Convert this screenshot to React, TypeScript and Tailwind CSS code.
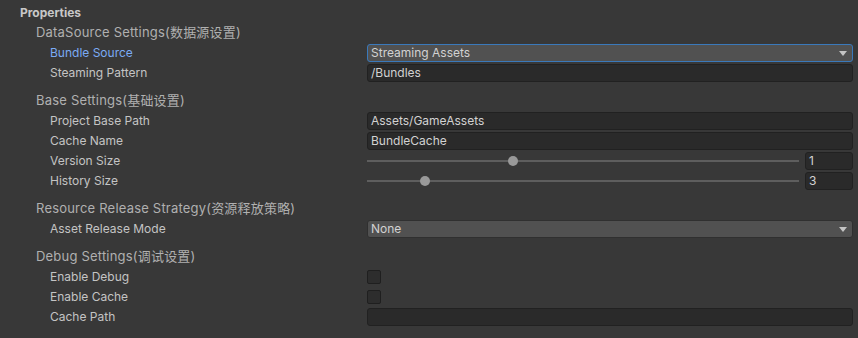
import React from 'react';

const FONT = { fontFamily: 'Inter, "Noto Sans CJK SC", sans-serif' };

function Label({ text, active }: { text: string; active?: boolean }) {
  return (
    <div className={`w-[367px] shrink-0 pl-[50px] text-[12px] ${active ? 'text-[#7babf4]' : 'text-[#c4c4c4]'}`}>
      {text}
    </div>
  );
}

function Row({ label, active, children }: { label: string; active?: boolean; children?: React.ReactNode }) {
  return (
    <div className="flex h-5 items-center pr-[5px]">
      <Label text={label} active={active} />
      <div className="flex h-[18px] flex-1 items-center">{children}</div>
    </div>
  );
}

function TextField({ value }: { value?: string }) {
  return (
    <div className="flex h-[18px] flex-1 items-center rounded-[3px] border border-[#212121] bg-[#2a2a2a] pl-[3px] text-[12px] text-[#d2d2d2]">
      {value}
    </div>
  );
}

function Dropdown({ value, focused }: { value: string; focused?: boolean }) {
  return (
    <div
      className={`flex h-[18px] flex-1 items-center justify-between rounded-[3px] border bg-[#515151] pl-[3px] pr-[5px] text-[12px] text-[#d2d2d2] ${
        focused ? 'border-[#3a79bb]' : 'border-[#303030]'
      }`}
    >
      <span>{value}</span>
      <svg width="8" height="5" viewBox="0 0 8 5">
        <path d="M0 0 L8 0 L4 5 Z" fill="#c4c4c4" />
      </svg>
    </div>
  );
}

function Slider({ value, thumb }: { value: number; thumb: number }) {
  return (
    <div className="flex flex-1 items-center">
      <div className="relative h-[18px] flex-1">
        <div className="absolute left-0 right-0 top-[8px] h-[2px] bg-[#5e5e5e]" />
        <div
          className="absolute top-[4px] h-[10px] w-[10px] rounded-full bg-[#999999]"
          style={{ left: thumb }}
        />
      </div>
      <div className="ml-[6px] flex h-[18px] w-[48px] items-center rounded-[3px] border border-[#212121] bg-[#2a2a2a] pl-[3px] text-[12px] text-[#d2d2d2]">
        {value}
      </div>
    </div>
  );
}

function Checkbox() {
  return <div className="h-[14px] w-[14px] rounded-[2px] border border-[#1f1f1f] bg-[#2d2d2d]" />;
}

function Header({ text }: { text: string }) {
  return (
    <div className="flex h-5 items-center pl-[36px] text-[13px] tracking-[0.2px] text-[#b0b0b0]">{text}</div>
  );
}

export default function App() {
  return (
    <div className="h-[338px] w-[858px] overflow-hidden bg-[#383838] pt-[3px]" style={FONT}>
      <div className="flex h-5 items-center pl-[20px] text-[12px] font-bold text-[#c8c8c8]">Properties</div>

      <Header text="DataSource Settings(数据源设置)" />
      <Row label="Bundle Source" active>
        <Dropdown value="Streaming Assets" focused />
      </Row>
      <Row label="Steaming Pattern">
        <TextField value="/Bundles" />
      </Row>

      <div className="mt-2">
        <Header text="Base Settings(基础设置)" />
        <Row label="Project Base Path">
          <TextField value="Assets/GameAssets" />
        </Row>
        <Row label="Cache Name">
          <TextField value="BundleCache" />
        </Row>
        <Row label="Version Size">
          <Slider value={1} thumb={141} />
        </Row>
        <Row label="History Size">
          <Slider value={3} thumb={53} />
        </Row>
      </div>

      <div className="mt-2">
        <Header text="Resource Release Strategy(资源释放策略)" />
        <Row label="Asset Release Mode">
          <Dropdown value="None" />
        </Row>
      </div>

      <div className="mt-2">
        <Header text="Debug Settings(调试设置)" />
        <Row label="Enable Debug">
          <Checkbox />
        </Row>
        <Row label="Enable Cache">
          <Checkbox />
        </Row>
        <Row label="Cache Path">
          <TextField />
        </Row>
      </div>
    </div>
  );
}
